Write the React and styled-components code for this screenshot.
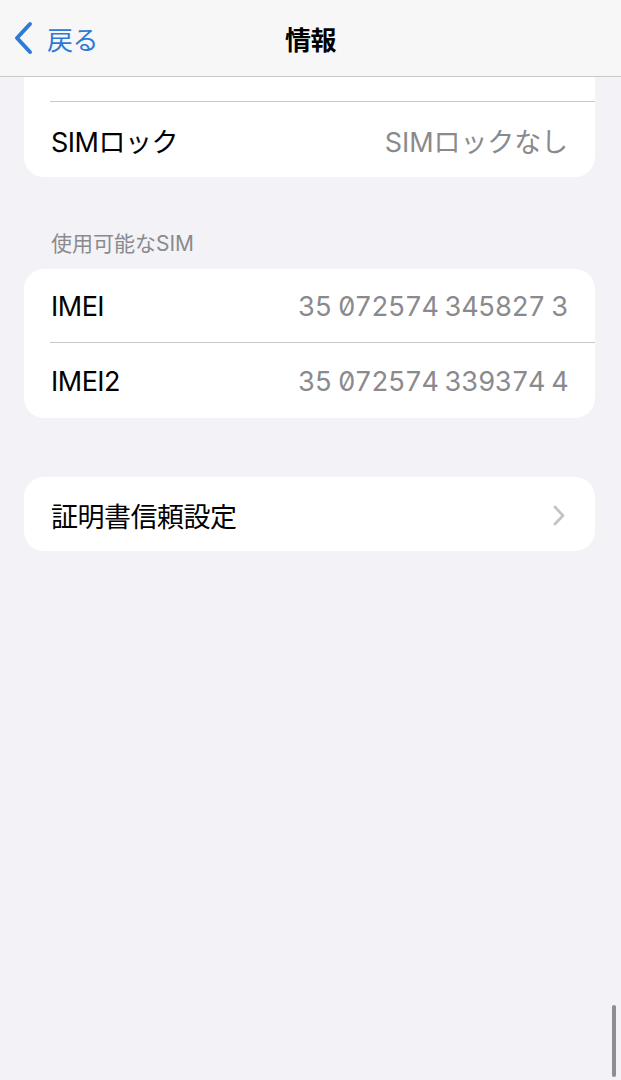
import styled, { createGlobalStyle } from "styled-components";

const GlobalStyle = createGlobalStyle`
    html, body {
        margin: 0;
        padding: 0;
        background: #f2f2f7;
    }
    body {
        font-family: Inter, "Noto Sans CJK JP", sans-serif;
        -webkit-font-smoothing: antialiased;
    }
`;

const Screen = styled.div`
    position: relative;
    min-height: 1080px;
    background: #f2f2f7;
    overflow: hidden;
`;

const NavBar = styled.div`
    height: 76px;
    display: grid;
    grid-template-columns: 1fr auto 1fr;
    align-items: center;
    background: #f7f7f7;
    border-bottom: 1px solid #c9c9cb;
`;

const BackButton = styled.div`
    display: flex;
    align-items: center;
    gap: 14px;
    padding-left: 13px;
    color: #2d7bd6;
    font-size: 26px;
    letter-spacing: -0.5px;
`;

const Title = styled.div`
    font-size: 26px;
    font-weight: 700;
    color: #000;
    letter-spacing: -0.5px;
`;

const Content = styled.div`
    padding: 0 26px 0 24px;
`;

const Card = styled.div`
    background: #fff;
    border-radius: ${props => props.clipped ? "0 0 20px 20px" : "20px"};
    overflow: hidden;
    margin-top: ${props => props.gap || 0}px;
`;

const Stub = styled.div`
    height: 24px;
`;

const Separator = styled.div`
    height: 1px;
    margin-left: 26px;
    background: #c8c8cb;
`;

const Row = styled.div`
    height: ${props => props.h || 74}px;
    display: flex;
    align-items: center;
    justify-content: space-between;
    padding: 2px ${props => props.chevron ? 30 : 27}px 0 27px;
    box-sizing: border-box;
`;

const Label = styled.span`
    font-size: 27px;
    color: #000;
    letter-spacing: -0.5px;
`;

const Value = styled.span`
    font-size: 27px;
    color: #8a8a8e;
    letter-spacing: ${props => props.numeric ? "-0.8px" : "-0.1px"};
    font-feature-settings: "zero" 1, "tnum" 1;
`;

const SectionHeader = styled.div`
    padding: 54px 0 12px 27px;
    font-size: 21px;
    line-height: 26px;
    color: #8a8a8e;
`;

const ScrollThumb = styled.div`
    position: absolute;
    right: 5px;
    bottom: 3px;
    width: 4px;
    height: 72px;
    border-radius: 2px;
    background: #8e8e90;
`;

const BackChevron = () => (
    <svg width="20" height="34" viewBox="0 0 20 34">
        <path d="M17 3 L4 17 L17 31" fill="none" stroke="#2d7bd6" strokeWidth="4" strokeLinecap="round" strokeLinejoin="round" />
    </svg>
);

const RowChevron = () => (
    <svg width="12" height="21" viewBox="0 0 12 21">
        <path d="M2 2 L10 10.5 L2 19" fill="none" stroke="#c4c4c7" strokeWidth="2.8" strokeLinecap="round" strokeLinejoin="round" />
    </svg>
);

export default function App() {
    return (
        <>
            <GlobalStyle />
            <Screen>
                <NavBar>
                    <BackButton>
                        <BackChevron />
                        <span>戻る</span>
                    </BackButton>
                    <Title>情報</Title>
                    <div />
                </NavBar>
                <Content>
                    <Card clipped>
                        <Stub />
                        <Separator />
                        <Row h={75}>
                            <Label>SIMロック</Label>
                            <Value>SIMロックなし</Value>
                        </Row>
                    </Card>

                    <SectionHeader>使用可能なSIM</SectionHeader>
                    <Card>
                        <Row h={73}>
                            <Label>IMEI</Label>
                            <Value numeric>35 072574 345827 3</Value>
                        </Row>
                        <Separator />
                        <Row h={75}>
                            <Label>IMEI2</Label>
                            <Value numeric>35 072574 339374 4</Value>
                        </Row>
                    </Card>

                    <Card gap={59}>
                        <Row chevron>
                            <Label>証明書信頼設定</Label>
                            <RowChevron />
                        </Row>
                    </Card>
                </Content>
                <ScrollThumb />
            </Screen>
        </>
    );
}
